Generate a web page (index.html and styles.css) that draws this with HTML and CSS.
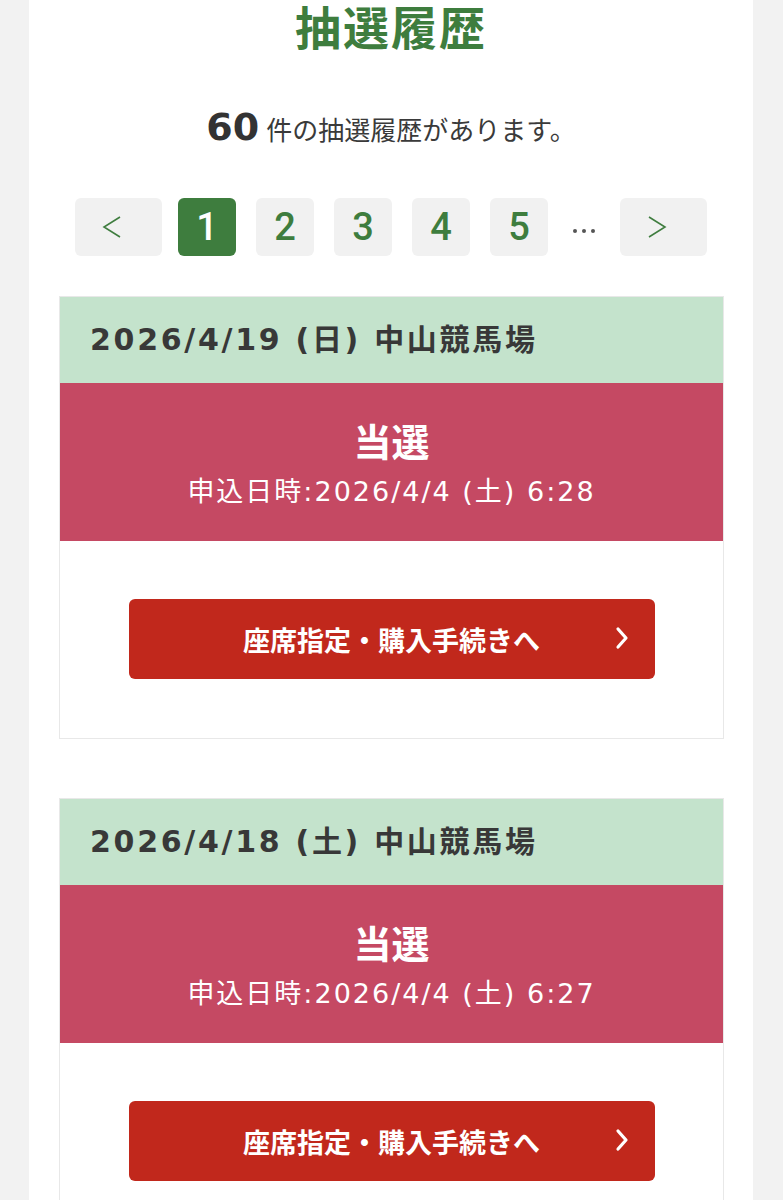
FILE: index.html
```html
<!DOCTYPE html>
<html lang="ja">
<head>
<meta charset="utf-8">
<title>抽選履歴</title>
<link rel="stylesheet" href="styles.css">
</head>
<body>
<div class="page">
  <h1 class="title">抽選履歴</h1>
  <p class="count"><span class="count-num">60</span>件の抽選履歴があります。</p>
  <nav class="pager">
    <a class="pg pg-arrow pg-prev" aria-label="前へ">
      <svg viewBox="0 0 20 22" width="20" height="22"><path d="M18 1 L2 11 L18 21" fill="none" stroke="#3f7d3f" stroke-width="1.6" stroke-linejoin="miter"/></svg>
    </a>
    <a class="pg pg-num active">1</a>
    <a class="pg pg-num">2</a>
    <a class="pg pg-num">3</a>
    <a class="pg pg-num">4</a>
    <a class="pg pg-num">5</a>
    <span class="pg-ellipsis"><i></i><i></i><i></i></span>
    <a class="pg pg-arrow" aria-label="次へ">
      <svg viewBox="0 0 20 22" width="20" height="22"><path d="M2 1 L18 11 L2 21" fill="none" stroke="#3f7d3f" stroke-width="1.6" stroke-linejoin="miter"/></svg>
    </a>
  </nav>

  <section class="card">
    <div class="card-head">2026/4/19 (日) 中山競馬場</div>
    <div class="card-result">
      <div class="result-title">当選</div>
      <div class="result-date">申込日時:2026/4/4 (土) 6:28</div>
    </div>
    <div class="card-body">
      <a class="btn">
        <span class="btn-label">座席指定・購入手続きへ</span>
        <svg class="btn-chevron" viewBox="0 0 16 24" width="16" height="24"><path d="M4 3 L12 12 L4 21" fill="none" stroke="#fff" stroke-width="3.2" stroke-linecap="round" stroke-linejoin="round"/></svg>
      </a>
    </div>
  </section>

  <section class="card">
    <div class="card-head">2026/4/18 (土) 中山競馬場</div>
    <div class="card-result">
      <div class="result-title">当選</div>
      <div class="result-date">申込日時:2026/4/4 (土) 6:27</div>
    </div>
    <div class="card-body">
      <a class="btn">
        <span class="btn-label">座席指定・購入手続きへ</span>
        <svg class="btn-chevron" viewBox="0 0 16 24" width="16" height="24"><path d="M4 3 L12 12 L4 21" fill="none" stroke="#fff" stroke-width="3.2" stroke-linecap="round" stroke-linejoin="round"/></svg>
      </a>
    </div>
  </section>
</div>
</body>
</html>
```

FILE: styles.css
```css
html, body {
  margin: 0;
  padding: 0;
}
body {
  background: #f2f2f2;
  font-family: "DejaVu Sans", "Noto Sans CJK JP", sans-serif;
  color: #333;
}
.page {
  width: 724px;
  margin-left: 29px;
  background: #fff;
  min-height: 1200px;
  overflow: hidden;
}
.title {
  margin: 0;
  padding-top: 2px;
  text-align: center;
  font-family: "Noto Sans CJK JP", sans-serif;
  font-size: 46px;
  line-height: 46px;
  font-weight: 700;
  color: #3e7d3e;
  letter-spacing: 2px;
}
.count {
  margin: 54px 0 0;
  text-align: center;
  font-family: "Noto Sans CJK JP", sans-serif;
  font-size: 26px;
  line-height: 50px;
  height: 50px;
  color: #3a3a3a;
}
.count-num {
  font-family: "DejaVu Sans", sans-serif;
  font-size: 38px;
  font-weight: 700;
  margin-right: 7px;
  color: #333;
}
.pager {
  margin-top: 46px;
  display: flex;
  justify-content: center;
  align-items: center;
  gap: 20px;
}
.pg {
  display: flex;
  align-items: center;
  justify-content: center;
  height: 58px;
  width: 58px;
  border-radius: 6px;
  background: #f1f1f1;
  color: #3e7d3e;
  font-family: Roboto, sans-serif;
  font-size: 38px;
  font-weight: 500;
  text-decoration: none;
}
.pg.active {
  background: #3e7d3e;
  color: #fff;
}
.pg-arrow {
  width: 87px;
  box-sizing: border-box;
  padding-right: 13px;
}
.pg-prev {
  margin-right: -4px;
}
.pg-ellipsis {
  width: 32px;
  display: flex;
  justify-content: center;
  gap: 5px;
  padding-top: 8px;
}
.pg-ellipsis i {
  width: 4px;
  height: 4px;
  border-radius: 50%;
  background: #555;
}
.card {
  margin: 40px 29px 0 30px;
  border: 1px solid #e8e8e8;
}
.card + .card {
  margin-top: 59px;
}
.card-head {
  background: #c4e3cc;
  height: 86px;
  line-height: 86px;
  padding-left: 30px;
  font-size: 30px;
  font-weight: 700;
  letter-spacing: 2.7px;
  color: #383838;
}
.card-result {
  background: #c54963;
  color: #fff;
  text-align: center;
  padding: 32px 0;
}
.result-title {
  font-family: "Noto Sans CJK JP", sans-serif;
  font-size: 38px;
  font-weight: 700;
  line-height: 50px;
}
.result-date {
  margin-top: 10px;
  font-size: 27px;
  line-height: 34px;
  letter-spacing: 2px;
  font-weight: 400;
}
.card-body {
  padding: 58px 0 59px;
  display: flex;
  justify-content: center;
}
.btn {
  position: relative;
  width: 526px;
  height: 80px;
  background: #c1281c;
  border-radius: 6px;
  display: flex;
  align-items: center;
  justify-content: center;
  color: #fff;
  text-decoration: none;
}
.btn-label {
  font-family: "Noto Sans CJK JP", sans-serif;
  font-size: 27px;
  font-weight: 700;
}
.btn-chevron {
  position: absolute;
  right: 25px;
  top: 27px;
}
```
